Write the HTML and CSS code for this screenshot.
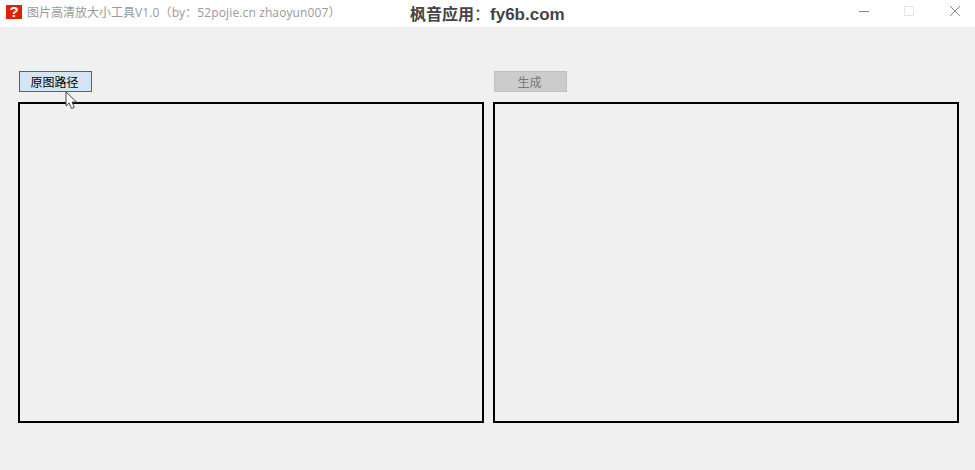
FILE: index.html
```html
<!DOCTYPE html>
<html lang="zh-CN">
<head>
    <meta charset="UTF-8">
    <meta name="viewport" content="width=device-width, initial-scale=1.0">
    <title>图片高清放大小工具</title>
    <link rel="stylesheet" href="styles.css">
</head>
<body>
    <header class="titlebar">
        <span class="app-icon">?</span>
        <span class="app-title">图片高清放大小工具<span class="latin">V1.0（by：52pojie.cn zhaoyun007）</span></span>
        <span class="watermark">枫音应用<span class="colon">：</span><span class="site">fy6b.com</span></span>
        <div class="win-buttons">
            <svg class="win-btn" width="45" height="16" viewBox="0 0 45 16"><path d="M0 7.500h10" stroke="#888" fill="none"/></svg>
            <svg class="win-btn" width="46" height="16" viewBox="0 0 46 16"><rect x="0.500" y="2.500" width="9" height="9" stroke="#e6e6e6" fill="none"/></svg>
            <svg class="win-btn" width="25" height="16" viewBox="0 0 25 16"><path d="M0 2l10 10M10 2L0 12" stroke="#888" fill="none"/></svg>
        </div>
    </header>
    <main class="workspace">
        <section class="column">
            <button class="btn btn-hover">原图路径</button>
            <div class="panel"></div>
        </section>
        <section class="column">
            <button class="btn btn-disabled">生成</button>
            <div class="panel"></div>
        </section>
    </main>
    <svg class="cursor" width="14" height="19" viewBox="0 0 14 19">
        <path d="M1 1v14l3.200-3 2.300 5.500 2.800-1.200-2.300-5.200h4.600z" fill="#fff" stroke="#444" stroke-width="1"/>
    </svg>
</body>
</html>
```
FILE: styles.css
```css
html, body {
    margin: 0;
    padding: 0;
}
body {
    position: relative;
    width: 975px;
    height: 470px;
    overflow: hidden;
    background-color: #f0f0f0;
    font-family: "Liberation Sans", "Noto Sans CJK SC", sans-serif;
}
.titlebar {
    display: flex;
    align-items: center;
    height: 27px;
    background-color: #fff;
    padding-left: 6px;
    box-sizing: border-box;
}
.app-icon {
    flex: none;
    width: 16px;
    height: 14px;
    margin-top: -3px;
    background-color: #dd2200;
    color: #fff;
    font-weight: bold;
    font-size: 15px;
    line-height: 14px;
    text-align: center;
}
.app-title {
    flex: none;
    width: 383px;
    margin-left: 5px;
    margin-top: -3px;
    color: #999;
    font-family: "Open Sans", "Noto Sans CJK SC", sans-serif;
    font-size: 12px;
    white-space: nowrap;
}
.latin {
    letter-spacing: 0.12px;
}
.watermark {
    flex: none;
    width: 449px;
    margin-top: -2px;
    color: #444;
    font-weight: bold;
    font-size: 16px;
    white-space: nowrap;
}
.colon {
    font-weight: normal;
}
.site {
    font-size: 17px;
}
.win-buttons {
    flex: none;
    display: flex;
    margin-top: -3px;
}
.win-btn {
    display: block;
}
.workspace {
    display: flex;
    gap: 9px;
    padding: 44px 0 0 18px;
}
.column {
    width: 466px;
}
.btn {
    display: block;
    width: 73px;
    height: 21px;
    margin: 0 0 10px 1px;
    padding: 0 2px 0 0;
    box-sizing: border-box;
    font-family: "Noto Sans CJK SC", sans-serif;
    font-size: 12px;
    line-height: 19px;
}
.btn-hover {
    background-color: #d5e5f3;
    border: 1px solid #2d6da4;
    color: #000;
}
.btn-disabled {
    background-color: #cccccc;
    border: 1px solid #bfbfbf;
    color: #777;
}
.panel {
    height: 321px;
    box-sizing: border-box;
    border: 2px solid #000;
}
.cursor {
    position: absolute;
    left: 65px;
    top: 91px;
}
```
